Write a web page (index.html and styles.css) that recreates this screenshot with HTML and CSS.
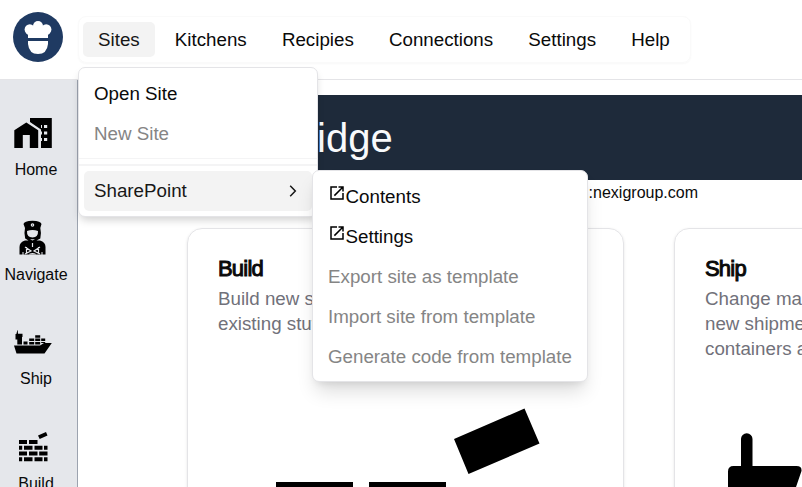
FILE: index.html
```html
<!DOCTYPE html>
<html lang="en">
<head>
<meta charset="utf-8">
<title>Bridge</title>
<link rel="stylesheet" href="styles.css">
</head>
<body>
<header class="topbar">
  <svg class="logo" width="50" height="50" viewBox="0 0 50 50">
    <circle cx="25" cy="25" r="25" fill="#1f3a62"/>
    <g fill="#fff"><circle cx="16.8" cy="17.5" r="5.2"/><circle cx="33.2" cy="17.5" r="5.2"/><circle cx="25" cy="14" r="5"/>
    <path d="M13 19.5 16 16H34L37 19.5 35 23V26H15V23ZM15 29H35V32Q34 42 25 42Q16 42 15 32Z"/></g>
  </svg>
  <nav class="menubar">
    <div class="menu-root"><a class="tab open">Sites</a>
      <div class="menu sites-menu">
        <div class="item">Open Site</div>
        <div class="item disabled">New Site</div>
        <div class="rule thin"></div>
        <div class="rule thick"></div>
        <div class="item selected">SharePoint
          <svg width="18" height="18" viewBox="0 0 18 18" fill="none" stroke="#171717" stroke-width="1.5"><path d="M6.2 3.8 11.3 9 6.2 14.2"/></svg>
        </div>
        <div class="menu submenu">
          <div class="item"><svg class="external" width="18" height="18" viewBox="0 0 24 24"><path d="M19 19H5V5h7V3H3v18h18v-9h-2zM14 3v2h3.6l-9.8 9.8 1.4 1.4L19 6.4V10h2V3z"/></svg>Contents</div>
          <div class="item"><svg class="external" width="18" height="18" viewBox="0 0 24 24"><path d="M19 19H5V5h7V3H3v18h18v-9h-2zM14 3v2h3.6l-9.8 9.8 1.4 1.4L19 6.4V10h2V3z"/></svg>Settings</div>
          <div class="item disabled">Export site as template</div>
          <div class="item disabled">Import site from template</div>
          <div class="item disabled">Generate code from template</div>
        </div>
      </div>
    </div>
    <a class="tab">Kitchens</a><a class="tab">Recipies</a><a class="tab">Connections</a><a class="tab">Settings</a><a class="tab">Help</a>
  </nav>
</header>
<div class="layout">
  <aside class="sidebar">
    <a class="side-link"><svg width="40" height="40" viewBox="0 0 40 40"><path d="M17 5H38.8V35H28V16.5L17 9Z"/><path d="M1.3 35V17.2L13.3 9.5 25.2 17.2V35H16.8V22H9.8V35Z"/><path fill="#e5e7eb" d="M31 12h3.2v3H31zM31 18.5h3.2v3H31zM31 25h3.2v3H31zM28 12h1v3h-1zM28 18.5h1v3h-1zM28 25h1v3h-1z"/></svg>Home</a>
    <a class="side-link"><svg width="40" height="40" viewBox="0 0 40 40">
      <path d="M10.5 6Q11 3 19.5 2.8Q28 3 28.5 6L27.3 10Q28.6 15 27.3 20.5L23.5 22.5H27Q32.5 24 32.5 29V36.5H6.5V29Q6.5 24 12 22.5H15.5L12.2 20.5Q10.8 15 12 10Z"/>
      <path fill="#e5e7eb" d="M14 13Q19.5 11 25 13Q25.4 19.3 19.5 19.5Q13.6 19.3 14 13ZM17 21.3H22L19.5 22.6Z"/>
      <g fill="none" stroke="#e5e7eb" stroke-width="1.2"><circle cx="19.5" cy="7" r="1.2"/><path d="M19.5 25V29M12 29 18 33 12 36M27 29 21 33 27 36M13.5 29V35M25.5 29V35"/></g><path fill="#e5e7eb" d="M16 36.6Q16 35 19.5 35T23 36.6ZM9.5 34h1v3h-1zM28.5 34h1v3h-1z"/></svg>Navigate</a>
    <a class="side-link"><svg width="40" height="40" viewBox="0 -3 40 40"><path d="M1 20.5H27L31 18H38.8L31.5 28.5H3.5ZM3.5 12H9V19.5H4.3V14.5H2.5V9H3.5V7.5H4.2V5.5H5V8.8H9.5V12ZM10.5 16.5h4v3h-4zM16.2 13.6h5v2.4h-5zM16.2 17h5v2.5h-5zM22.2 10.2h5v2.5h-5zM22.2 13.6h5v2.4h-5zM22.2 17h5v2.5h-5zM28.2 13.6h4v2.4h-4zM28.2 17h4v1h-4z"/></svg>Ship</a>
    <a class="side-link"><svg width="40" height="40" viewBox="0 -1 40 40"><path d="M6 12h8v4H6zM16 12h8.5v4H16zM6 17.8h3.2v4H6zM11 17.8h8.5v4H11zM21.5 17.8h8v4h-8zM31 17.8h3.5v4H31zM6 23.5h8v4H6zM16 23.5h8.5v4H16zM26.2 23.5h8.3v4h-8.3zM6 29.2h3.2v4H6zM11 29.2h8.5v4H11zM21.5 29.2h8v4h-8zM31 29.2h3.5v4H31zM25 7.5 33 4 34.5 7.5 26.7 11z"/></svg>Build</a>
  </aside>
  <main class="content">
    <div class="banner"><h1>Bridge</h1></div>
    <p class="tenant">Tenant :nexigroup.com</p>
    <div class="cards">
      <section class="card">
        <h2>Build</h2>
        <p>Build new sites or edit<br>existing stuff</p>
        <svg class="bricks" width="300" height="180" viewBox="0 0 300 180"><path d="M208 34 278.5 3.5 293.5 38.5 222.5 69ZM30 77h77v35H30zM123 77h77v35h-77z"/></svg>
      </section>
      <section class="card">
        <h2>Ship</h2>
        <p>Change management,<br>new shipments and<br>containers abroad</p>
        <svg class="boat" width="120" height="150" viewBox="0 0 120 150"><path d="M13 60V33a5.7 5.7 0 0 1 11.5 0V60H68.5Q74 60 73.5 65L67 84 60 110H0V65.5Q0 60 5.5 60Z"/></svg>
      </section>
    </div>
  </main>
</div>
</body>
</html>
```

FILE: styles.css
```css
* { box-sizing: border-box; }
body { margin: 0; height: 487px; overflow: hidden; background: #fff; color: #0a0a0a; font: 18.75px/25px "Liberation Sans", Arial, sans-serif; }
.topbar { display: flex; height: 80px; padding: 12px 0 0 13px; border-bottom: 1px solid #e4e4e7; }
.logo { flex: none; }
.menubar { display: flex; align-items: center; height: 47px; margin: 4px 0 0 15px; padding: 5px 5px 5px 4px; gap: 5.15px; border: 1px solid #fafafa; border-radius: 8px; box-shadow: 0 1px 2px #00000008; }
.menu-root { position: relative; }
.tab { display: block; padding: 5px 15px; border-radius: 5px; }
.open, .selected { background: #f3f3f3; color: #171717; }
.menu { position: absolute; background: #fff; border: 1px solid #e4e4e7; border-radius: 7px; padding: 5px; z-index: 5; }
.sites-menu { left: -5px; top: 45px; width: 240px; height: 150px; box-shadow: 0 5px 8px -2px #0000002e; }
.submenu { left: 233px; top: 102px; width: 276px; height: 212px; box-shadow: 0 13px 19px -4px #00000024, 0 5px 8px -5px #00000020; }
.item { display: flex; align-items: center; height: 40px; padding: 0 10px; border-radius: 5px; white-space: nowrap; }
.disabled { color: #858585; }
.selected { line-height: 23px; padding-bottom: 1px; }
.selected svg { margin-left: auto; }
.external { align-self: flex-start; margin: 8px -.5px 0 0; }
.rule { margin: 0 -5px; background: #f4f4f5; }
.thin { height: 1px; margin-top: 5px; }
.thick { height: 2px; margin-top: 5px; margin-bottom: 5px; }
.layout { display: flex; height: 407px; }
.sidebar { flex: none; width: 78px; padding-top: 33px; border-right: 1px solid #9ca3af; background: #e5e7eb; }
.side-link { display: flex; flex-direction: column; align-items: center; width: 74px; height: 104.6px; gap: 4px; font-size: 16px; margin-left: -1px; }
.side-link svg { flex: none; margin-left: -7px; }
.content { flex: none; width: 1120px; padding-top: 15px; }
.banner { height: 85px; margin-left: 17px; padding: 18px 0 0 182px; background: #1e2a3a; color: #f8fafc; }
h1 { margin: 0; font-size: 40px; line-height: 50px; font-weight: 400; }
.tenant { width: 620px; margin: 0; font-size: 16px; line-height: 26px; text-align: right; }
.cards { display: flex; gap: 50px; margin: 22px 0 0 109px; }
.card { width: 437px; height: 400px; padding: 29px 30px; border: 1px solid #e4e4e7; border-radius: 15px; box-shadow: 0 1px 3px #0000001a; }
h2 { margin: 0; font-size: 22px; line-height: 22.5px; letter-spacing: -.8px; font-weight: 400; -webkit-text-stroke: 1px #0a0a0a; }
.card p { margin: 5px 0 0; color: #71717a; white-space: nowrap; }
.bricks { display: block; margin: 69px 0 0 28px; }
.boat { display: block; margin: 45px 0 0 23px; }
```
